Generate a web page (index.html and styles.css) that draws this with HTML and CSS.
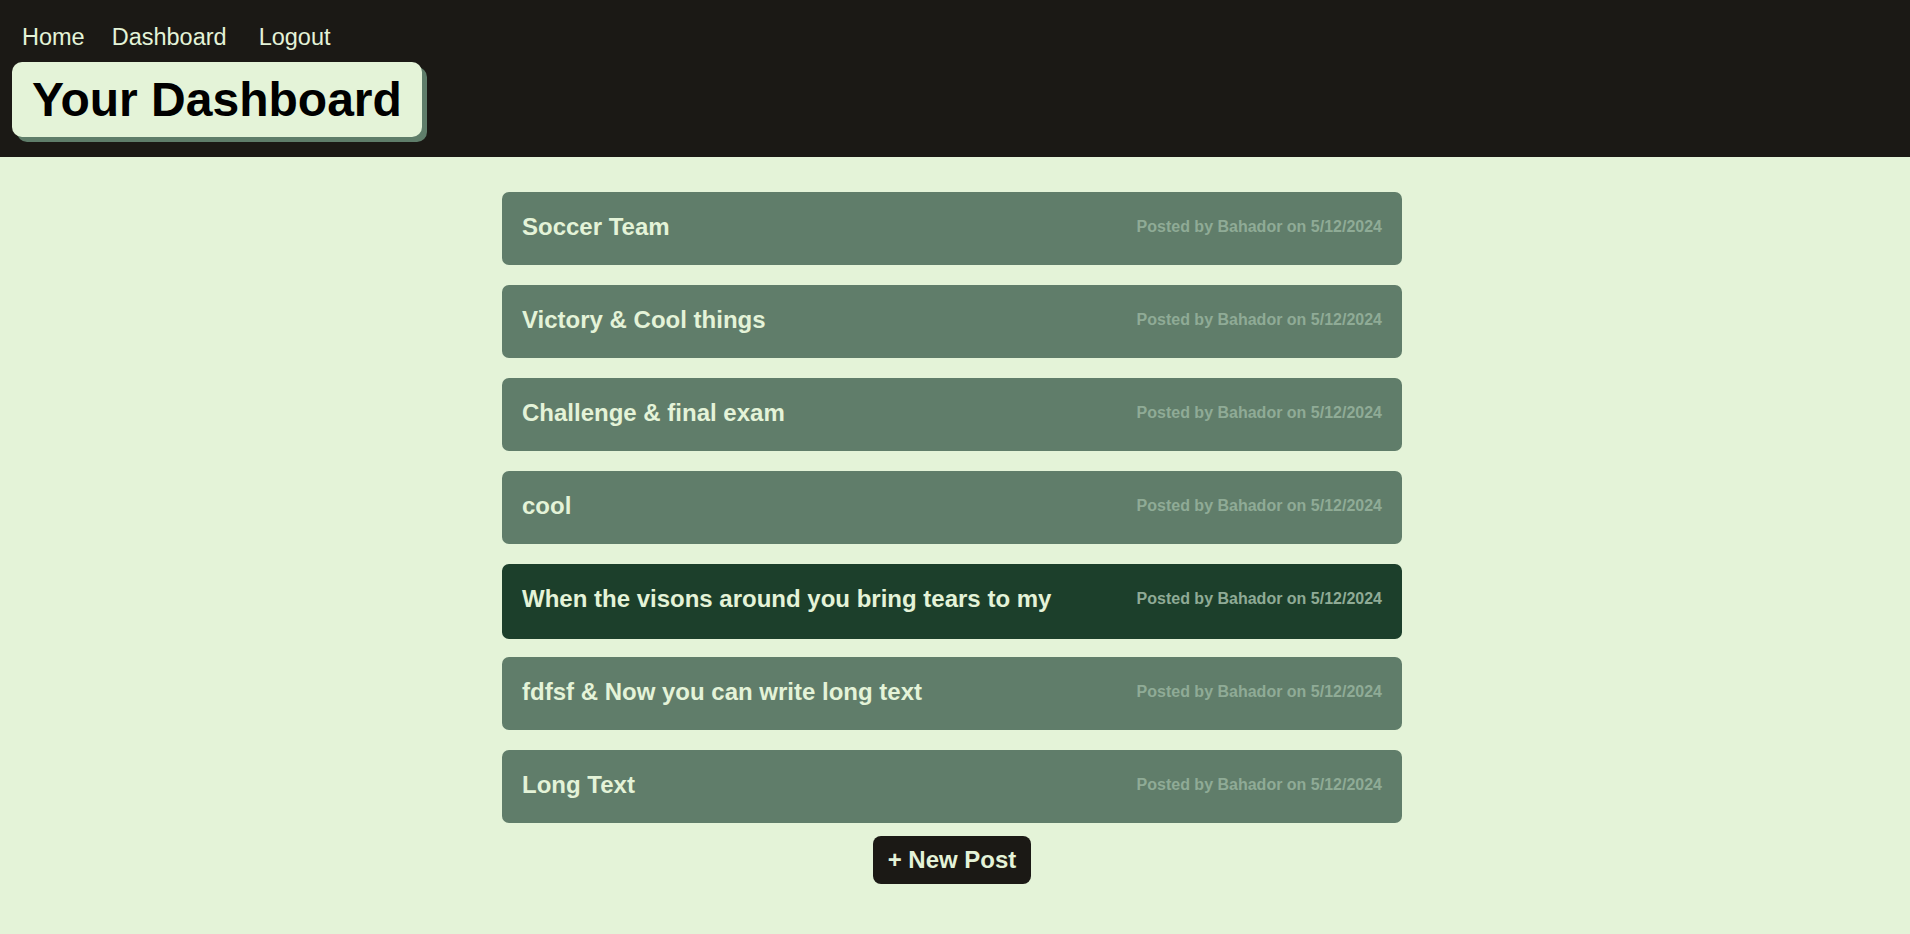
FILE: index.html
```html
<!DOCTYPE html>
<html lang="en">
<head>
<meta charset="utf-8">
<title>Your Dashboard</title>
<link rel="stylesheet" href="styles.css">
</head>
<body>
<header class="site-header">
  <nav class="nav">
    <a class="nav-link nav-home" href="#">Home</a>
    <a class="nav-link nav-dash" href="#">Dashboard</a>
    <a class="nav-link nav-logout" href="#">Logout</a>
  </nav>
  <h1 class="page-title">Your Dashboard</h1>
</header>
<main class="content">
  <div class="post-list">
    <a class="post" href="#"><span class="post-title">Soccer Team</span><span class="post-meta">Posted by Bahador on 5/12/2024</span></a>
    <a class="post" href="#"><span class="post-title">Victory &amp; Cool things</span><span class="post-meta">Posted by Bahador on 5/12/2024</span></a>
    <a class="post" href="#"><span class="post-title">Challenge &amp; final exam</span><span class="post-meta">Posted by Bahador on 5/12/2024</span></a>
    <a class="post" href="#"><span class="post-title">cool</span><span class="post-meta">Posted by Bahador on 5/12/2024</span></a>
    <a class="post post-active" href="#"><span class="post-title">When the visons around you bring tears to my</span><span class="post-meta">Posted by Bahador on 5/12/2024</span></a>
    <a class="post" href="#"><span class="post-title">fdfsf &amp; Now you can write long text</span><span class="post-meta">Posted by Bahador on 5/12/2024</span></a>
    <a class="post" href="#"><span class="post-title">Long Text</span><span class="post-meta">Posted by Bahador on 5/12/2024</span></a>
  </div>
  <button class="new-post" type="button">+ New Post</button>
</main>
</body>
</html>
```
FILE: styles.css
```css
* { box-sizing: border-box; }

html, body {
  margin: 0;
  padding: 0;
}

body {
  background: #e4f3d8;
  font-family: "Liberation Sans", Arial, sans-serif;
  min-height: 934px;
}

.site-header {
  background: #1b1915;
  height: 157px;
  padding: 24px 0 0 12px;
}

.nav {
  display: flex;
  align-items: baseline;
  height: 27px;
}

.nav-link {
  color: #e4f3d8;
  text-decoration: none;
  font-size: 23.5px;
  line-height: 27px;
}

.nav-home { margin-left: 10px; }
.nav-dash { margin-left: 27px; }
.nav-logout { margin-left: 32px; }

.page-title {
  display: inline-block;
  margin: 11px 0 0 0;
  background: #e4f3d8;
  color: #000;
  font-size: 48px;
  font-weight: 700;
  line-height: 55px;
  padding: 10px 20px 10px 20px;
  border-radius: 10px;
  box-shadow: 5px 5px 0 #5f7d6a;
  width: 410px;
}

.content {
  display: flex;
  flex-direction: column;
  align-items: center;
  padding: 35px 6px 0 0;
}

.post-list {
  width: 900px;
  display: flex;
  flex-direction: column;
  gap: 20px;
}

.post {
  display: flex;
  align-items: center;
  justify-content: space-between;
  height: 73px;
  padding: 21px 20px 25px 20px;
  background: #607d6a;
  border-radius: 7px;
  text-decoration: none;
}

.post-active {
  background: #1c3f2b;
  box-shadow: 0 2px 0 #1c3f2b;
}

.post-title {
  color: #e4f3d8;
  font-size: 24px;
  font-weight: 700;
  line-height: 27px;
}

.post-meta {
  color: #8fab96;
  font-size: 16px;
  font-weight: 700;
  line-height: 18px;
}

.new-post {
  margin-top: 13px;
  height: 48px;
  width: 158px;
  padding: 0;
  border: none;
  border-radius: 8px;
  background: #1b1915;
  color: #e4f3d8;
  font-family: "Liberation Sans", Arial, sans-serif;
  font-size: 24px;
  font-weight: 700;
  cursor: pointer;
}
```
